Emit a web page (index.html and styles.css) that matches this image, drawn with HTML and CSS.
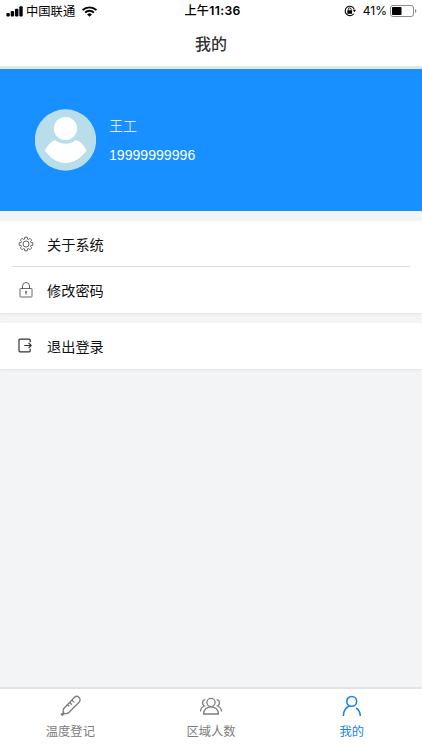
FILE: index.html
```html
<!DOCTYPE html>
<html lang="zh-CN">
<head>
  <meta charset="UTF-8" />
  <meta name="viewport" content="width=device-width, initial-scale=1.0">
  <title>我的</title>
  <link rel="stylesheet" href="styles.css">
</head>
<body>
  <div class="app">

    <!-- Status bar -->
    <div class="status-bar">
      <div class="status-left">
        <svg class="signal" width="17" height="11" viewBox="0 0 17 11">
          <rect x="0.4" y="7" width="3.4" height="3.5" rx="1" />
          <rect x="4.7" y="5" width="3.4" height="5.5" rx="1" />
          <rect x="9" y="2.8" width="3.4" height="7.7" rx="1" />
          <rect x="13.3" y="0.3" width="3.4" height="10.2" rx="1" />
        </svg>
        <span class="carrier">中国联通</span>
        <svg class="wifi" width="15" height="11" viewBox="0 0 15 11">
          <path d="M0.6 4.1a10 10 0 0 1 13.8 0M3.1 6.6a6.3 6.3 0 0 1 8.8 0" fill="none" stroke="#000" stroke-width="1.9" />
          <path d="M7.5 10.8L5.1 8.5a3.5 3.5 0 0 1 4.8 0z" />
        </svg>
      </div>
      <div class="status-time"><span class="period">上午</span>11:36</div>
      <div class="status-right">
        <svg class="rotation" width="12" height="12" viewBox="0 0 12 12">
          <path d="M10.2 4.1A4.7 4.7 0 1 0 9.7 8.7" fill="none" stroke="#000" stroke-width="1.1" />
          <path d="M8.6 4.8h3.4l-1.5 2.4z" />
          <rect x="3.3" y="5.3" width="4.8" height="3.4" rx="0.5" />
          <path d="M4.3 5.5V4.3a1.4 1.4 0 0 1 2.8 0v1.2" fill="none" stroke="#000" stroke-width="0.9" />
        </svg>
        <span class="percent">41%</span>
        <svg class="battery" width="27" height="12" viewBox="0 0 27 12">
          <rect x="0.5" y="0.5" width="23" height="11" rx="2.5" fill="#fff" stroke="#8c8c8c" />
          <rect x="2" y="2" width="9.5" height="8" rx="0.8" />
          <path d="M25 4v4q1.4-.6 1.4-2T25 4z" fill="#8c8c8c" />
        </svg>
      </div>
    </div>

    <div class="nav-bar">我的</div>

    <!-- User info -->
    <div class="profile">
      <svg class="avatar" width="61" height="62" viewBox="0 0 61 62">
        <circle cx="30.5" cy="31" r="30.7" fill="#b9deeb" />
        <circle cx="30.5" cy="19.5" r="11.6" fill="#fff" />
        <path d="M20 31Q30.5 38.5 41 31C46 33 49.5 37 51.5 41.5C46 49 39 54 30.5 54S15 49 9.8 41.5C12 37 15.5 33 20 31z" fill="#fff" />
      </svg>
      <div class="profile-text">
        <div class="name">王工</div>
        <div class="phone">19999999996</div>
      </div>
    </div>

    <!-- Menu -->
    <div class="menu">
      <div class="menu-item">
        <svg class="menu-icon" width="16" height="16" viewBox="0 0 16 16">
          <path d="M6.7 1.2h2.6l.2 1.9.9.4 1.5-1.2 1.8 1.8-1.2 1.5.4.9 1.9.2v2.6l-1.9.2-.4.9 1.2 1.5-1.8 1.8-1.5-1.2-.9.4-.2 1.9H6.7l-.2-1.9-.9-.4-1.5 1.2-1.8-1.8 1.2-1.5-.4-.9-1.9-.2V6.7l1.9-.2.4-.9-1.2-1.5 1.8-1.8 1.5 1.2.9-.4z" />
          <circle cx="8" cy="8" r="3" />
        </svg>
        <span>关于系统</span>
      </div>
      <div class="menu-item">
        <svg class="menu-icon" width="16" height="16" viewBox="0 0 16 16">
          <rect x="2" y="6.5" width="12" height="8.5" rx="0.6" />
          <path d="M4.5 6.5V4a3.5 3.5 0 0 1 7 0v2.5M8 10.5v2" />
          <circle cx="8" cy="10" r="0.7" />
        </svg>
        <span>修改密码</span>
      </div>
    </div>

    <div class="menu">
      <div class="menu-item">
        <svg class="menu-icon logout" width="16" height="16" viewBox="0 0 16 16">
          <path d="M12.2 4.2V2.2a1 1 0 0 0-1-1H2a1 1 0 0 0-1 1v10.6a1 1 0 0 0 1 1h9.2a1 1 0 0 0 1-1v-2M6.2 7.5h6.8M10.5 4.9l2.7 2.6-2.7 2.6" />
        </svg>
        <span>退出登录</span>
      </div>
    </div>

    <!-- Bottom tabs -->
    <div class="tab-bar">
      <div class="tab">
        <svg width="24" height="24" viewBox="0 0 24 24">
          <path d="M5.6 14.7L16.3 3.5a3.3 3.3 0 0 1 4.8 4.7L10.3 18.9q-1.8 1.3-4.5.4-1.3-2.6-.2-4.6z" />
          <path d="M5.7 18.2l-2.4 2 1.1 1.1 2.2-2M11.6 8.5l2.3 2.2M13.9 6.2l2.3 2.2M9.6 10.7l1.6 1.5" />
        </svg>
        <span>温度登记</span>
      </div>
      <div class="tab">
        <svg width="24" height="24" viewBox="0 0 24 24">
          <circle cx="12" cy="8.5" r="4.1" />
          <path d="M4.6 20c0-9.6 14.8-9.6 14.8 0zM6.4 5.6c-3.4.2-3.8 5-.9 6.4C3 12.9 1.6 14.6 1.5 17.6M17.6 5.6c3.4.2 3.8 5 .9 6.4 2.5.9 3.9 2.6 4 5.6" />
        </svg>
        <span>区域人数</span>
      </div>
      <div class="tab active">
        <svg width="24" height="24" viewBox="0 0 24 24">
          <circle cx="11.7" cy="7.4" r="4.9" />
          <path d="M3.4 22c0-5 2.3-8.3 5.9-9.9M16.1 14c2.6 1.5 4 4.2 4.2 8" />
        </svg>
        <span>我的</span>
      </div>
    </div>

  </div>
</body>
</html>
```
FILE: styles.css
```css
* {
  box-sizing: border-box;
}

html, body {
  height: 100%;
  margin: 0;
}

body {
  font-family: "Liberation Sans", "Noto Sans CJK SC", sans-serif;
  background: #f3f4f6;
  color: #111;
}

.app {
  height: 100vh;
  display: flex;
  flex-direction: column;
  overflow: hidden;
}

/* Status bar */
.status-bar {
  height: 22px;
  padding: 0 5px 0 6px;
  display: grid;
  grid-template-columns: 1fr auto 1fr;
  align-items: center;
  background: #fff;
  color: #000;
  font-size: 12px;
  line-height: 20px;
}

.status-left,
.status-right {
  display: flex;
  align-items: center;
}

.status-right {
  justify-content: flex-end;
}

.carrier {
  margin-left: 3px;
  padding-top: 1px;
  font-size: 12.3px;
}

.wifi {
  margin-left: 7px;
}

.status-time {
  padding-left: 2px;
  font-family: Inter, "Noto Sans CJK SC", sans-serif;
  font-weight: 600;
  font-size: 12.2px;
  letter-spacing: 0.3px;
}

.period {
  font-weight: 500;
}

.percent {
  margin: 0 3px 0 7px;
  font-family: Inter, sans-serif;
}

.nav-bar {
  height: 47px;
  padding-bottom: 2px;
  display: flex;
  align-items: center;
  justify-content: center;
  background: #fff;
  border-bottom: 3px solid #e5e6e8;
  color: #333;
  font-size: 16px;
  font-weight: 500;
}

/* User info */
.profile {
  height: 142px;
  padding-left: 35px;
  display: flex;
  align-items: center;
  background: #1890ff;
  color: #fff;
}

.profile-text {
  margin-left: 13px;
  padding-bottom: 2px;
}

.name {
  padding-top: 1px;
  font-size: 14px;
  font-weight: 300;
  line-height: 30px;
}

.phone {
  font-size: 14.1px;
  line-height: 28px;
}

/* Menu cards */
.menu {
  margin-top: 10px;
  background: #fff;
  box-shadow: 0 1px 3px rgba(0, 0, 0, 0.07);
}

.menu-item {
  height: 46px;
  margin: 0 12px;
  padding-left: 6px;
  display: flex;
  align-items: center;
  font-size: 14.2px;
}

.menu-item:first-child:not(:last-child) {
  border-bottom: 1px solid #dcdcdc;
}

.menu-icon {
  margin-right: 13px;
  fill: none;
  stroke: #555;
  stroke-width: 0.9;
  stroke-linejoin: round;
}

.logout {
  stroke: #333;
  stroke-width: 1.2;
}

/* Bottom tabs */
.tab-bar {
  height: 63px;
  margin-top: auto;
  display: flex;
  background: #fff;
  border-top: 2px solid #e2e3e5;
}

.tab {
  flex: 1;
  padding-top: 5px;
  display: flex;
  flex-direction: column;
  align-items: center;
  color: #7d7d7d;
  font-size: 12.3px;
  line-height: 18px;
}

.tab svg {
  margin-bottom: 5px;
  fill: none;
  stroke: currentColor;
  stroke-width: 1.3;
}

.tab.active {
  color: #1b84e6;
}

.tab.active svg {
  stroke-width: 1.6;
}
```
